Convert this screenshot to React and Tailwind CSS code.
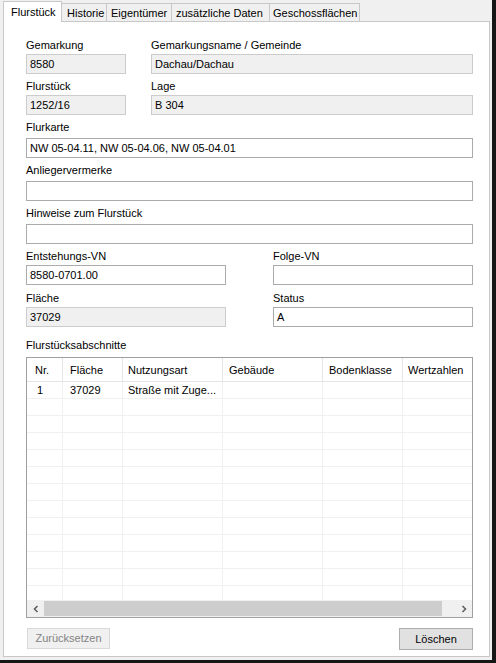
import React from 'react';

const font = { fontFamily: '"Liberation Sans", Arial, sans-serif' };

function Field({ label, value, readOnly, width, labelClass = 'mt-[5px]', inputClass = 'mt-[2px]' }) {
  return (
    <div className={width}>
      <div className={`h-[14px] leading-[14px] text-[11px] text-black ${labelClass}`}>{label}</div>
      <div
        className={`h-[20px] leading-[18px] px-[3px] text-[11px] text-black border ${inputClass} ${
          readOnly ? 'bg-[#f0f0f0] border-[#cccccc]' : 'bg-white border-[#ababab]'
        }`}
      >
        {value}
      </div>
    </div>
  );
}

const columns = [
  { label: 'Nr.', w: 'w-[36px]', pl: 'pl-[8px]' },
  { label: 'Fläche', w: 'w-[60px]', pl: 'pl-[7px]' },
  { label: 'Nutzungsart', w: 'w-[100px]', pl: 'pl-[5px]' },
  { label: 'Gebäude', w: 'w-[100px]', pl: 'pl-[6px]' },
  { label: 'Bodenklasse', w: 'w-[80px]', pl: 'pl-[6px]' },
  { label: 'Wertzahlen', w: 'w-[100px]', pl: 'pl-[5px]' },
];

const rows = [['1', '37029', 'Straße mit Zuge...', '', '', '']];
for (let i = 0; i < 12; i++) rows.push(['', '', '', '', '', '']);

function Tab({ label, w, pl = 'pl-[5px]', selected }) {
  if (selected) {
    return (
      <div className={`${w} h-[21px] mb-[-1px] bg-white border-l border-r border-t border-[#c8c8c8] pl-[7px] leading-[20px] text-[11px] text-black relative z-10 whitespace-nowrap`}>
        {label}
      </div>
    );
  }
  return (
    <div className={`${w} ${pl} h-[18px] bg-[#f0f0f0] border-t border-r border-[#c8c8c8] leading-[18px] text-[11px] text-black whitespace-nowrap overflow-hidden`}>
      {label}
    </div>
  );
}

export default function App() {
  return (
    <div className="w-[496px] h-[663px] bg-[#161616] overflow-hidden" style={font}>
      <div className="w-[492px] h-[660px] bg-[#f0f0f0] pl-[3px] pt-[1px]">
        <div className="flex items-end h-[20px]">
          <Tab label="Flurstück" w="w-[59px]" selected />
          <Tab label="Historie" w="w-[45px]" />
          <Tab label="Eigentümer" w="w-[65px]" pl="pl-[4px]" />
          <Tab label="zusätzliche Daten" w="w-[98px]" pl="pl-[4px]" />
          <Tab label="Geschossflächen" w="w-[90px]" pl="pl-[3px]" />
        </div>
        <div className="w-[487px] h-[636px] bg-white border border-[#c8c8c8] pl-[22px] pt-[16px]">
          <div className="w-[447px]">
            <div className="flex gap-[25px]">
              <Field label="Gemarkung" value="8580" readOnly width="w-[100px]" labelClass="" />
              <Field label="Gemarkungsname / Gemeinde" value="Dachau/Dachau" readOnly width="w-[322px]" labelClass="" />
            </div>
            <div className="flex gap-[25px]">
              <Field label="Flurstück" value="1252/16" readOnly width="w-[100px]" />
              <Field label="Lage" value="B 304" readOnly width="w-[322px]" />
            </div>
            <Field label="Flurkarte" value="NW 05-04.11, NW 05-04.06, NW 05-04.01" inputClass="mt-[4px]" />
            <Field label="Anliegervermerke" value="" inputClass="mt-[4px]" />
            <Field label="Hinweise zum Flurstück" value="" inputClass="mt-[4px]" />
            <div className="flex gap-[47px]">
              <Field label="Entstehungs-VN" value="8580-0701.00" width="w-[200px]" />
              <Field label="Folge-VN" value="" width="w-[200px]" />
            </div>
            <div className="flex gap-[47px]">
              <Field label="Fläche" value="37029" readOnly width="w-[200px]" labelClass="mt-[6px]" />
              <Field label="Status" value="A" width="w-[200px]" labelClass="mt-[6px]" />
            </div>
            <div className="mt-[11px] h-[14px] leading-[14px] text-[11px] text-black">Flurstücksabschnitte</div>
            <div className="mt-[5px] h-[261px] border border-[#a0a0a0] bg-white flex flex-col">
              <div className="flex h-[24px] border-b border-[#e5e5e5] overflow-hidden shrink-0">
                {columns.map((c) => (
                  <div key={c.label} className={`${c.w} ${c.pl} shrink-0 border-r border-[#e5e5e5] leading-[24px] text-[11px] text-black`}>
                    {c.label}
                  </div>
                ))}
              </div>
              <div className="flex-1 overflow-hidden">
                {rows.map((r, i) => (
                  <div key={i} className="flex h-[17px] border-b border-[#f0f0f0]">
                    {r.map((v, j) => (
                      <div
                        key={j}
                        className={`${columns[j].w} ${j === 0 ? 'pl-[10px]' : columns[j].pl} shrink-0 border-r border-[#f0f0f0] leading-[16px] text-[11px] text-black whitespace-nowrap`}
                      >
                        {v}
                      </div>
                    ))}
                  </div>
                ))}
              </div>
              <div className="h-[17px] bg-[#f0f0f0] flex items-center shrink-0">
                <div className="w-[17px] h-[17px] flex items-center justify-center">
                  <svg width="8" height="8" viewBox="0 0 8 8">
                    <path d="M5.5 1 L2.5 4 L5.5 7" fill="none" stroke="#606060" strokeWidth="1.6" />
                  </svg>
                </div>
                <div className="w-[398px] h-[15px] bg-[#cdcdcd]" />
                <div className="flex-1" />
                <div className="w-[17px] h-[17px] flex items-center justify-center">
                  <svg width="8" height="8" viewBox="0 0 8 8">
                    <path d="M2.5 1 L5.5 4 L2.5 7" fill="none" stroke="#606060" strokeWidth="1.6" />
                  </svg>
                </div>
              </div>
            </div>
            <div className="mt-[10px] flex justify-between">
              <div className="ml-[1px] w-[83px] h-[21px] border border-[#d9d9d9] bg-[#f0f0f0] text-center leading-[19px] text-[11px] text-[#838383]">
                Zurücksetzen
              </div>
              <div className="w-[74px] h-[22px] border border-[#adadad] bg-[#e1e1e1] text-center leading-[20px] text-[11px] text-black">
                Löschen
              </div>
            </div>
          </div>
        </div>
      </div>
    </div>
  );
}
